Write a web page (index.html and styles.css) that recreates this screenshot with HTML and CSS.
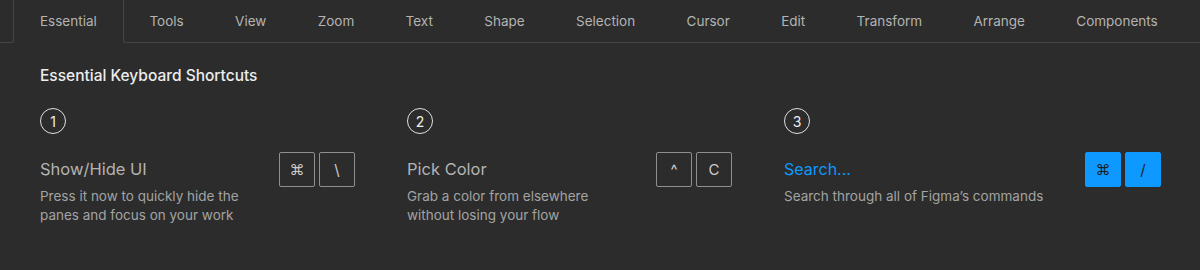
FILE: index.html
```html
<!DOCTYPE html>
<html lang="en">
<head>
    <meta charset="UTF-8">
    <title>Keyboard Shortcuts</title>
    <link rel="stylesheet" href="styles.css">
</head>
<body>

    <div class="tab-bar">
        <div class="tab-edge"></div>
        <div class="tab active">Essential</div>
        <div class="tab-rest">
            <div class="tab">Tools</div>
            <div class="tab">View</div>
            <div class="tab">Zoom</div>
            <div class="tab">Text</div>
            <div class="tab">Shape</div>
            <div class="tab">Selection</div>
            <div class="tab">Cursor</div>
            <div class="tab">Edit</div>
            <div class="tab">Transform</div>
            <div class="tab">Arrange</div>
            <div class="tab">Components</div>
        </div>
    </div>

    <div class="content">
        <h1>Essential Keyboard Shortcuts</h1>

        <div class="shortcuts">
            <div class="shortcut">
                <div class="step">1</div>
                <div class="shortcut-row">
                    <div class="shortcut-text">
                        <div class="shortcut-title">Show/Hide UI</div>
                        <div class="shortcut-desc">Press it now to quickly hide the<br>panes and focus on your work</div>
                    </div>
                    <div class="keys">
                        <span class="key">&#8984;</span>
                        <span class="key">\</span>
                    </div>
                </div>
            </div>

            <div class="shortcut">
                <div class="step">2</div>
                <div class="shortcut-row">
                    <div class="shortcut-text">
                        <div class="shortcut-title">Pick Color</div>
                        <div class="shortcut-desc">Grab a color from elsewhere<br>without losing your flow</div>
                    </div>
                    <div class="keys">
                        <span class="key">^</span>
                        <span class="key">C</span>
                    </div>
                </div>
            </div>

            <div class="shortcut">
                <div class="step">3</div>
                <div class="shortcut-row">
                    <div class="shortcut-text">
                        <div class="shortcut-title link">Search...</div>
                        <div class="shortcut-desc">Search through all of Figma’s commands</div>
                    </div>
                    <div class="keys">
                        <span class="key blue">&#8984;</span>
                        <span class="key blue">/</span>
                    </div>
                </div>
            </div>
        </div>
    </div>

</body>
</html>
```

FILE: styles.css
```css
body {
    margin: 0;
    background-color: #2c2c2c;
    font-family: Inter, "Noto Sans", sans-serif;
    color: #b3b3b3;
}

/* barra de pestañas */
.tab-bar {
    display: flex;
    height: 43px;
}

.tab-edge {
    flex-shrink: 0;
    width: 13px;
    border-right: 1px solid #454545;
    border-bottom: 1px solid #454545;
    border-bottom-right-radius: 3px;
}

.tab {
    flex-shrink: 0;
    padding: 0 25.7px;
    font-size: 13.5px;
    line-height: 42px;
    color: #b3b3b3;
    white-space: nowrap;
}

.tab.active {
    padding: 0 26px;
}

.tab-rest {
    flex: 1;
    display: flex;
    border-left: 1px solid #454545;
    border-bottom: 1px solid #454545;
    border-bottom-left-radius: 3px;
}

.content {
    padding: 0 40px;
}

h1 {
    margin: 23px 0 22px;
    font-size: 15.5px;
    font-weight: 500;
    line-height: 20px;
    color: #ededed;
}

.shortcuts {
    display: grid;
    grid-template-columns: 315px 325px 377px;
    column-gap: 52px;
}

.step {
    width: 24px;
    height: 24px;
    border: 1px solid #e0e0e0;
    border-radius: 50%;
    display: flex;
    align-items: center;
    justify-content: center;
    font-size: 14px;
    color: #eeeeee;
    margin-bottom: 18px;
}

.shortcut-row {
    display: flex;
    justify-content: space-between;
    align-items: flex-start;
}

.shortcut-title {
    font-size: 16.5px;
    line-height: 35px;
    color: #b3b3b3;
}

.shortcut-title.link {
    color: #0d99ff;
    font-size: 16px;
}

.shortcut-desc {
    font-size: 13.5px;
    line-height: 18.5px;
    color: #a3a3a3;
}

.keys {
    display: flex;
    gap: 4px;
}

.key {
    width: 34px;
    height: 33px;
    border: 1px solid #8f8f8f;
    border-radius: 2px;
    display: flex;
    align-items: center;
    justify-content: center;
    font-size: 15px;
    color: #cccccc;
}

.key.blue {
    background-color: #0d99ff;
    border-color: #0d99ff;
    color: #1e1e1e;
}
```
